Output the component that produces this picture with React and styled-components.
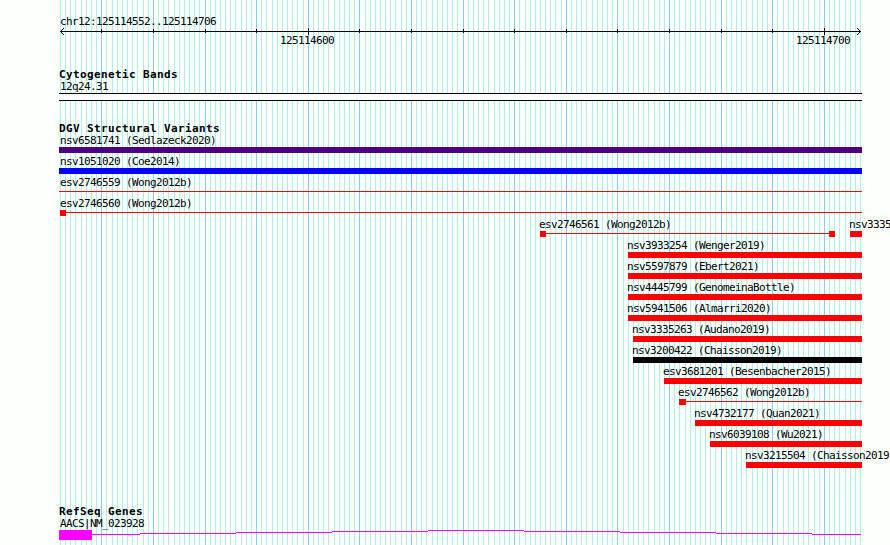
import React from "react";
import styled, { createGlobalStyle } from "styled-components";

const Global = createGlobalStyle`
  html, body { margin: 0; background: #fdfffc; overflow: hidden; }
`;

const Browser = styled.main`
  position: relative;
  box-sizing: border-box;
  width: 890px;
  height: 545px;
  padding: 15px 28px 0 59px;
  overflow: hidden;
  color: #000;
  font: 11px/13px "DejaVu Sans Mono", monospace;
  letter-spacing: -0.622px;
  white-space: pre;
`;

const Gridlines = styled.svg`
  position: absolute;
  inset: 0;
`;

const Content = styled.div`
  position: relative;
`;

const Label = styled.div`
  height: 13px;
  text-indent: ${(p) => p.$indent || 0}px;
`;

const Ruler = styled.svg`
  display: block;
  height: 6px;
  overflow: visible;
`;

const Scale = styled.div`
  display: grid;
  grid-template-columns: 54px 54px;
  column-gap: 462px;
  padding-left: 221px;
  height: 13px;
`;

const Track = styled.section`
  margin-top: ${(p) => p.$gap}px;
`;

const Title = styled.h2`
  height: 12px;
  margin: 0;
  font: inherit;
  font-weight: bold;
  letter-spacing: 0.378px;
`;

const Band = styled.div`
  height: 6px;
  border: solid #000;
  border-width: 1px 0;
  background: #fdfffc;
`;

const Row = styled.div`
  display: flex;
  gap: 15px;
  height: 21px;
  padding-left: ${(p) => p.$start - 59}px;
`;

const Feature = styled.div`
  flex: none;
  width: ${(p) => p.$width}px;
`;

const Bar = styled.div`
  height: 6px;
  background: ${(p) => p.$color};
`;

const Span = styled.div`
  display: flex;
  justify-content: space-between;
  height: 6px;
  background: linear-gradient(#f00, #f00) 0 2px / 100% 1px no-repeat;
`;

const Breakpoint = styled.i`
  width: ${(p) => p.$width}px;
  height: 6px;
  background: #f00;
`;

const Gene = styled.svg`
  display: block;
`;

const END = 862;
const RED = "#f00";

const rows = [
  [{ name: "nsv6581741 (Sedlazeck2020)", start: 59, color: "#4b0082", indent: 1 }],
  [{ name: "nsv1051020 (Coe2014)", start: 59, color: "#00f", indent: 1 }],
  [{ name: "esv2746559 (Wong2012b)", start: 59, span: true, indent: 1 }],
  [{ name: "esv2746560 (Wong2012b)", start: 60, span: true, left: 6, indent: 0 }],
  [
    { name: "esv2746561 (Wong2012b)", start: 540, end: 835, span: true, left: 6, right: 6 },
    { name: "nsv3335", start: 850 },
  ],
  [{ name: "nsv3933254 (Wenger2019)", start: 628 }],
  [{ name: "nsv5597879 (Ebert2021)", start: 628 }],
  [{ name: "nsv4445799 (GenomeinaBottle)", start: 628 }],
  [{ name: "nsv5941506 (Almarri2020)", start: 628 }],
  [{ name: "nsv3335263 (Audano2019)", start: 633 }],
  [{ name: "nsv3200422 (Chaisson2019)", start: 633, color: "#000" }],
  [{ name: "esv3681201 (Besenbacher2015)", start: 664 }],
  [{ name: "esv2746562 (Wong2012b)", start: 679, span: true, left: 7 }],
  [{ name: "nsv4732177 (Quan2021)", start: 695 }],
  [{ name: "nsv6039108 (Wu2021)", start: 710 }],
  [{ name: "nsv3215504 (Chaisson2019", start: 746 }],
];

const lines = Array.from({ length: 156 }, (_, n) => ({
  x: Math.round(60 + (n * 800) / 155),
  major: n % 10 === 8,
  labelled: n === 48 || n === 148,
}));

const intron = [
  [92, 140, 4],
  [140, 236, 3],
  [236, 332, 2],
  [332, 428, 1],
  [428, 524, 0],
  [524, 620, 1],
  [620, 716, 2],
  [716, 812, 3],
  [812, 861, 4],
];

function Variant({ name, start, end = END, color = RED, indent = -1, span, left, right }) {
  return (
    <Feature $width={end - start}>
      <Label $indent={indent}>{name}</Label>
      {span ? (
        <Span>
          {left && <Breakpoint $width={left} />}
          {right && <Breakpoint $width={right} />}
        </Span>
      ) : (
        <Bar $color={color} />
      )}
    </Feature>
  );
}

export default function App() {
  return (
    <Browser>
      <Global />
      <Gridlines width="890" height="545" shapeRendering="crispEdges">
        {lines.map((l) => (
          <rect key={l.x} x={l.x} y="0" width="1" height="545" fill={l.major ? "#87ceeb" : "#afeeee"} />
        ))}
      </Gridlines>
      <Content>
        <Label $indent={1}>chr12:125114552..125114706</Label>
        <Ruler width="803" viewBox="59 28 803 6" shapeRendering="crispEdges">
          <rect x="60" y="31" width="801" height="1" />
          {lines
            .filter((l) => l.major)
            .map((l) => (
              <rect
                key={l.x}
                x={l.x}
                y={l.labelled ? 28 : 29}
                width="1"
                height={l.labelled ? 7 : 4}
              />
            ))}
          <path d="M61 30h1v1h-1zM62 29h1v1h-1zM63 28h1v1h-1zM61 32h1v1h-1zM62 33h1v1h-1zM63 34h1v1h-1z" />
          <path d="M859 30h1v1h-1zM858 29h1v1h-1zM857 28h1v1h-1zM859 32h1v1h-1zM858 33h1v1h-1zM857 34h1v1h-1z" />
        </Ruler>
        <Scale>
          <span>125114600</span>
          <span>125114700</span>
        </Scale>
        <Track $gap={21}>
          <Title>Cytogenetic Bands</Title>
          <Label $indent={1}>12q24.31</Label>
          <Band />
        </Track>
        <Track $gap={21}>
          <Title>DGV Structural Variants</Title>
          {rows.map((features) => (
            <Row key={features[0].name} $start={features[0].start}>
              {features.map((f) => (
                <Variant key={f.name} {...f} />
              ))}
            </Row>
          ))}
        </Track>
        <Track $gap={35}>
          <Title>RefSeq Genes</Title>
          <Label $indent={1}>AACS|NM_023928</Label>
          <Gene width="803" height="10" viewBox="59 0 803 10" fill="#f0f" shapeRendering="crispEdges">
            <rect x="59" y="0" width="33" height="10" />
            {intron.map(([from, to, y]) => (
              <rect key={from} x={from} y={y} width={to - from} height="1" />
            ))}
          </Gene>
        </Track>
      </Content>
    </Browser>
  );
}
